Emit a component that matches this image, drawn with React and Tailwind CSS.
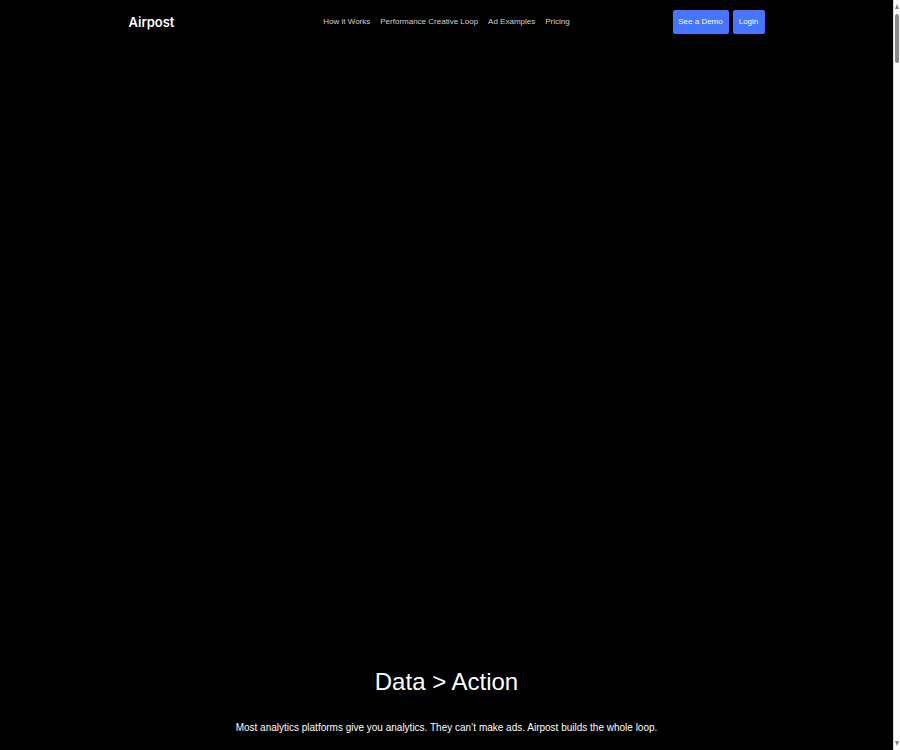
import { clsx } from 'clsx';

const NAV_LINKS = [
  { label: 'How it Works', href: '#how-it-works' },
  { label: 'Performance Creative Loop', href: '#loop' },
  { label: 'Ad Examples', href: '#examples' },
  { label: 'Pricing', href: '#pricing' },
];

export default function App() {
  return (
    <div className="flex min-h-screen bg-black font-['Liberation_Sans',Arial,sans-serif] text-white">
      <div className="flex min-w-0 flex-1 flex-col">
        <Header />
        <Hero />
      </div>
      <ScrollRail />
    </div>
  );
}

function Header() {
  return (
    <header className="px-6 pt-0.5">
      <div className="mx-auto grid h-10 max-w-[636px] grid-cols-[1fr_auto_1fr] items-center">
        <a href="#top" className="font-['Inter',sans-serif] text-[13px] leading-5 font-semibold">
          Airpost
        </a>
        <nav className="flex gap-2.5">
          {NAV_LINKS.map((link) => (
            <a key={link.label} href={link.href} className="text-[8px] leading-5 whitespace-nowrap text-[#d2d2d2]">
              {link.label}
            </a>
          ))}
        </nav>
        <div className="flex justify-end gap-1">
          <HeaderButton className="w-14">See a Demo</HeaderButton>
          <HeaderButton className="w-8">Login</HeaderButton>
        </div>
      </div>
    </header>
  );
}

function HeaderButton({ className, children }) {
  return (
    <button
      type="button"
      className={clsx('h-6 rounded-xs bg-[#4875ff] text-[8px] leading-5 whitespace-nowrap', className)}
    >
      {children}
    </button>
  );
}

function Hero() {
  return (
    <main className="flex flex-1 flex-col items-center justify-end px-6 pb-3 text-center">
      <h1 className="text-[24px] leading-10">Data &gt; Action</h1>
      <p className="mt-4 text-[10px] leading-5">
        Most analytics platforms give you analytics. They can’t make ads. Airpost builds the whole loop.
      </p>
    </main>
  );
}

function ScrollRail() {
  return (
    <div aria-hidden className="flex w-[7px] shrink-0 flex-col items-center border-l border-[#d8d8d8] bg-[#fcfcfc] py-1">
      <svg viewBox="0 0 4 5" className="h-[5px] w-1 fill-[#858585]">
        <path d="M2 0 4 5H0Z" />
      </svg>
      <div className="mt-[5px] h-[49px] w-1 rounded-full bg-[#8b8b8b]" />
      <svg viewBox="0 0 4 5" className="mt-auto h-[5px] w-1 fill-[#858585]">
        <path d="M0 0h4L2 5Z" />
      </svg>
    </div>
  );
}
